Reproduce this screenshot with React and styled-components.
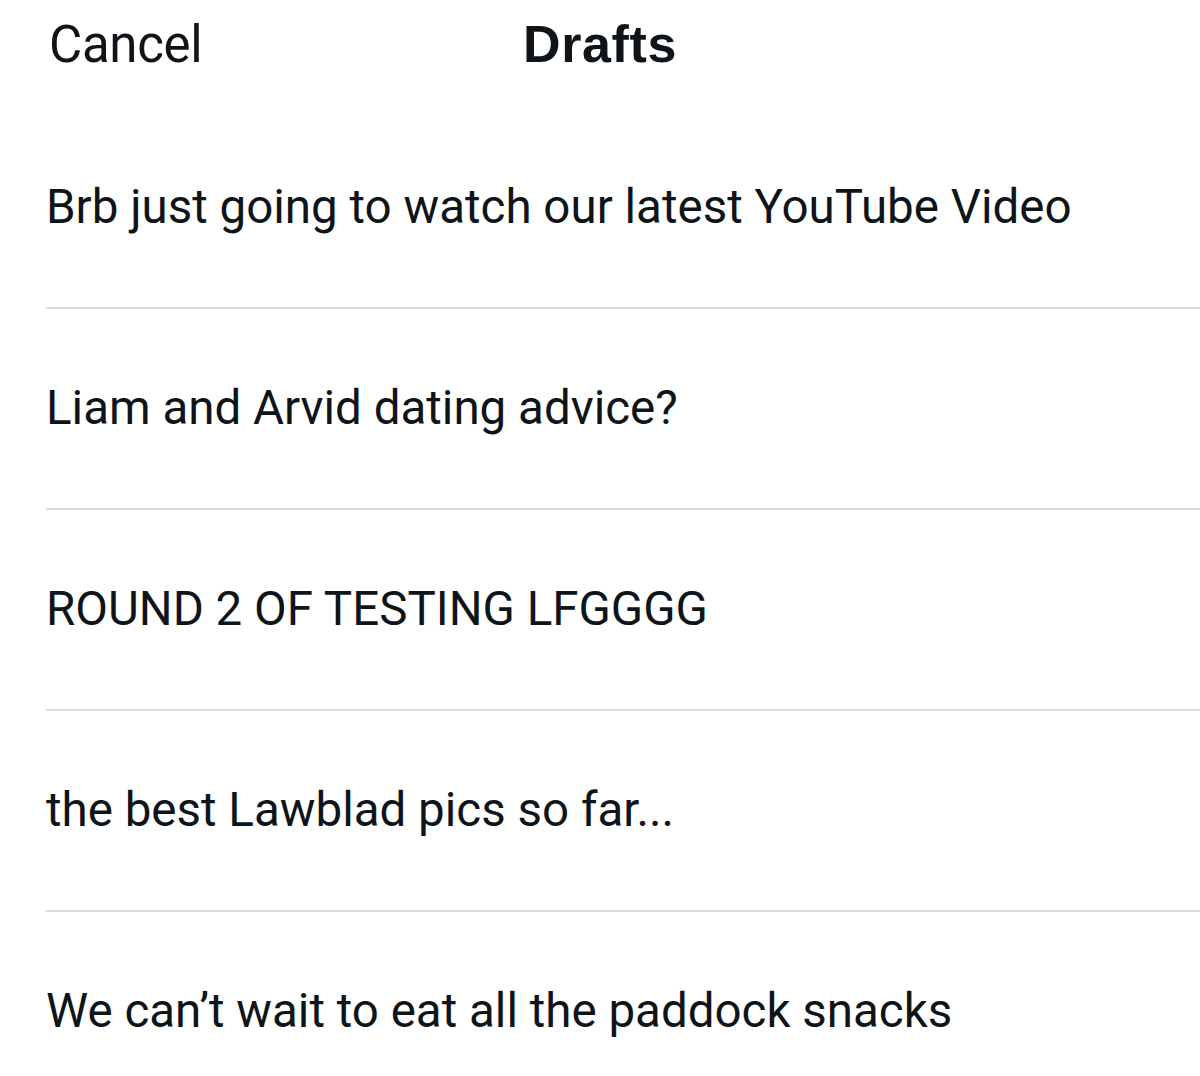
import React from 'react';
import styled, { createGlobalStyle } from 'styled-components';

const GlobalStyle = createGlobalStyle`
  html, body {
    margin: 0;
    padding: 0;
    background: #ffffff;
    overflow: hidden;
  }

  body {
    font-family: Roboto, "Liberation Sans", sans-serif;
    color: #0f1419;
    -webkit-font-smoothing: antialiased;
  }
`;

const Screen = styled.div`
  width: 1200px;
  background: #ffffff;
`;

const Header = styled.header`
  display: grid;
  grid-template-columns: 1fr auto 1fr;
  align-items: center;
  height: 88px;
  padding: 0 49px 20px;
`;

const CancelButton = styled.button`
  justify-self: start;
  padding: 0;
  border: none;
  background: none;
  font-family: Roboto, "Liberation Sans", sans-serif;
  font-size: 51px;
  font-weight: 400;
  line-height: 1;
  letter-spacing: -0.3px;
  color: #0f1419;
  cursor: pointer;
`;

const Title = styled.h1`
  margin: 0;
  font-family: "Liberation Sans", Roboto, sans-serif;
  font-size: 52px;
  font-weight: 700;
  line-height: 1;
  letter-spacing: 0.6px;
  color: #0f1419;
`;

const DraftList = styled.ul`
  margin: 0;
  padding: 0;
  list-style: none;
`;

const DraftRow = styled.li`
  display: flex;
  align-items: center;
  height: 199px;
  margin-left: 46px;
  border-bottom: ${({ $last }) => ($last ? 'none' : '2px solid #dbdbdb')};
  font-size: 47.5px;
  line-height: 1;
  white-space: nowrap;
  cursor: pointer;
`;

const drafts = [
  'Brb just going to watch our latest YouTube Video',
  'Liam and Arvid dating advice?',
  'ROUND 2 OF TESTING LFGGGG',
  'the best Lawblad pics so far...',
  'We can\u2019t wait to eat all the paddock snacks',
];

export default function App() {
  return (
    <>
      <GlobalStyle />
      <Screen>
        <Header>
          <CancelButton>Cancel</CancelButton>
          <Title>Drafts</Title>
          <span />
        </Header>
        <DraftList>
          {drafts.map((text, i) => (
            <DraftRow key={text} $last={i === drafts.length - 1}>
              {text}
            </DraftRow>
          ))}
        </DraftList>
      </Screen>
    </>
  );
}
